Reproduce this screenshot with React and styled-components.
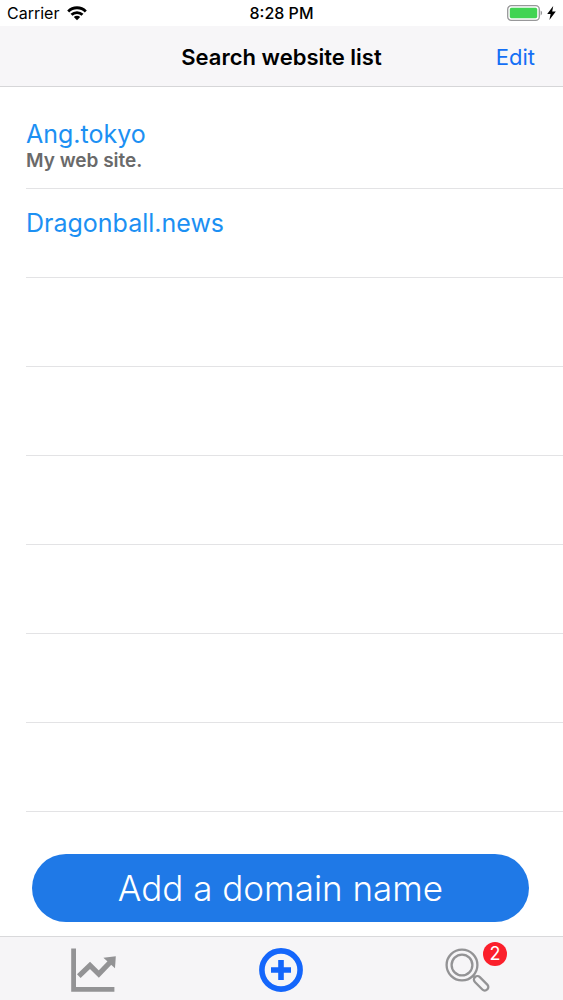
import styled, { createGlobalStyle } from "styled-components"

const GlobalStyle = createGlobalStyle`
  *, *::before, *::after {
    box-sizing: border-box;
  }
  body {
    margin: 0;
    background-color: #ffffff;
    font-family: Inter, "Liberation Sans", sans-serif;
    color: #000000;
  }
  button {
    font-family: inherit;
    border: none;
    background: none;
    padding: 0;
    cursor: pointer;
  }
`

const Screen = styled.div`
  display: flex;
  flex-direction: column;
  min-height: 100vh;
`

const StatusBar = styled.div`
  display: grid;
  grid-template-columns: 1fr auto 1fr;
  align-items: center;
  height: 26px;
  padding: 0 7px;
  font-size: 16px;
`

const StatusGroup = styled.div`
  display: flex;
  align-items: center;
  justify-content: ${(props) => (props.$end ? "flex-end" : "flex-start")};
  gap: ${(props) => (props.$end ? "4px" : "8px")};
`

const StatusTime = styled.time`
  font-weight: 500;
`

const NavBar = styled.header`
  display: grid;
  grid-template-columns: 1fr auto 1fr;
  align-items: center;
  height: 61px;
  padding: 2px 28px 0;
  background-color: #f7f6f8;
  border-bottom: 1px solid #d6d6d8;
`

const Title = styled.h1`
  grid-column: 2;
  margin: 0;
  font-size: 22px;
  font-weight: 600;
`

const EditButton = styled.button`
  justify-self: end;
  color: #146ff5;
  font-size: 22px;
`

const SiteList = styled.ul`
  flex: 1;
  margin: 0;
  padding: 13px 0 0 26px;
  list-style: none;
`

const SiteRow = styled.li`
  height: 89px;
  padding-top: 18px;
  border-bottom: 1px solid #e3e3e5;
`

const SiteLink = styled.a`
  display: block;
  color: #1c90f3;
  font-size: 25px;
  line-height: 32px;
  text-decoration: none;
`

const SiteNote = styled.p`
  margin: 0;
  color: #6a6a6a;
  font-size: 19px;
  font-weight: 600;
  line-height: 22px;
`

const Actions = styled.div`
  display: flex;
  padding: 14px 34px 14px 32px;
`

const AddButton = styled.button`
  flex: 1;
  height: 68px;
  border-radius: 34px;
  background-color: #1f79e7;
  color: #ffffff;
  font-size: 35px;
  font-weight: 300;
`

const TabBar = styled.nav`
  display: grid;
  grid-template-columns: repeat(3, 1fr);
  height: 64px;
  padding-right: 2px;
  background-color: #f6f5f7;
  border-top: 1px solid #d9d9db;
`

const Tab = styled.button`
  display: flex;
  align-items: center;
  justify-content: center;
  padding-top: 3px;
  color: ${(props) => (props.$active ? "#1466fb" : "#939395")};
`

const TabIcon = styled.span`
  position: relative;
  display: flex;
`

const Badge = styled.span`
  position: absolute;
  top: -6px;
  right: -17px;
  width: 24px;
  height: 24px;
  border-radius: 50%;
  background-color: #fb1f2b;
  color: #ffffff;
  font-size: 18px;
  line-height: 24px;
  text-align: center;
`

const WifiIcon = () => (
  <svg width="20" height="15" viewBox="0 0 20 15" aria-hidden="true">
    <g fill="none" stroke="#000000" strokeWidth="2.8">
      <path d="M1.2 5.4a12.4 12.4 0 0 1 17.6 0" />
      <path d="M4.5 8.8a7.8 7.8 0 0 1 11 0" />
    </g>
    <path d="M10 14.2 6.8 11a4.5 4.5 0 0 1 6.4 0z" />
  </svg>
)

const BatteryIcon = () => (
  <svg width="36" height="16" viewBox="0 0 36 16" aria-hidden="true">
    <rect x="0.7" y="0.7" width="31.6" height="14.6" rx="3.6" fill="#ffffff" stroke="#98989a" strokeWidth="1.3" />
    <rect x="2.8" y="2.8" width="27.4" height="10.4" rx="1.6" fill="#41d453" />
    <path d="M33.6 5.6c2 .8 2 4 0 4.8z" fill="#98989a" />
  </svg>
)

const BoltIcon = () => (
  <svg width="9" height="14" viewBox="0 0 9 14" aria-hidden="true">
    <path d="M6.2 0 0.2 8h3.4L2.4 14 8.8 5.6H5.2z" />
  </svg>
)

const ChartIcon = () => (
  <svg width="45" height="44" viewBox="0 0 45 44" aria-hidden="true">
    <path d="M2.6 0.4v41h40.8" fill="none" stroke="currentColor" strokeWidth="4.8" />
    <path d="M7.8 28.2 19 17.4l8.8 8.6L39.4 14" fill="none" stroke="currentColor" strokeWidth="5.2" />
    <path d="M32.4 9.8 44.8 8.2l-.8 12z" fill="currentColor" />
  </svg>
)

const PlusIcon = () => (
  <svg width="44" height="44" viewBox="0 0 44 44" aria-hidden="true">
    <g fill="none" stroke="currentColor" strokeWidth="5.6">
      <circle cx="22" cy="22" r="19.1" />
      <path d="M12 22h20M22 12v20" />
    </g>
  </svg>
)

const SearchIcon = () => (
  <svg width="45" height="45" viewBox="0 0 45 45" aria-hidden="true">
    <g fill="none" stroke="currentColor" strokeWidth="2.3">
      <circle cx="17" cy="17" r="15.4" />
      <circle cx="17" cy="17" r="10.4" />
      <path d="M27.4 29.2 29.4 27.2" />
      <rect x="27.4" y="31.8" width="17.4" height="7" rx="3.4" transform="rotate(45 36.1 35.3)" />
    </g>
  </svg>
)

const sites = [
  { name: "Ang.tokyo", note: "My web site." },
  { name: "Dragonball.news" },
  {},
  {},
  {},
  {},
  {},
  {},
]

function App() {
  return (
    <>
      <GlobalStyle />
      <Screen>
        <StatusBar>
          <StatusGroup>
            Carrier
            <WifiIcon />
          </StatusGroup>
          <StatusTime>8:28 PM</StatusTime>
          <StatusGroup $end>
            <BatteryIcon />
            <BoltIcon />
          </StatusGroup>
        </StatusBar>
        <NavBar>
          <Title>Search website list</Title>
          <EditButton type="button">Edit</EditButton>
        </NavBar>
        <SiteList>
          {sites.map((site, index) => (
            <SiteRow key={index}>
              {site.name && <SiteLink href={`#${site.name}`}>{site.name}</SiteLink>}
              {site.note && <SiteNote>{site.note}</SiteNote>}
            </SiteRow>
          ))}
        </SiteList>
        <Actions>
          <AddButton type="button">Add a domain name</AddButton>
        </Actions>
        <TabBar>
          <Tab type="button" aria-label="Statistics">
            <TabIcon>
              <ChartIcon />
            </TabIcon>
          </Tab>
          <Tab type="button" aria-label="Add" $active>
            <TabIcon>
              <PlusIcon />
            </TabIcon>
          </Tab>
          <Tab type="button" aria-label="Search">
            <TabIcon>
              <SearchIcon />
              <Badge>2</Badge>
            </TabIcon>
          </Tab>
        </TabBar>
      </Screen>
    </>
  )
}

export default App
